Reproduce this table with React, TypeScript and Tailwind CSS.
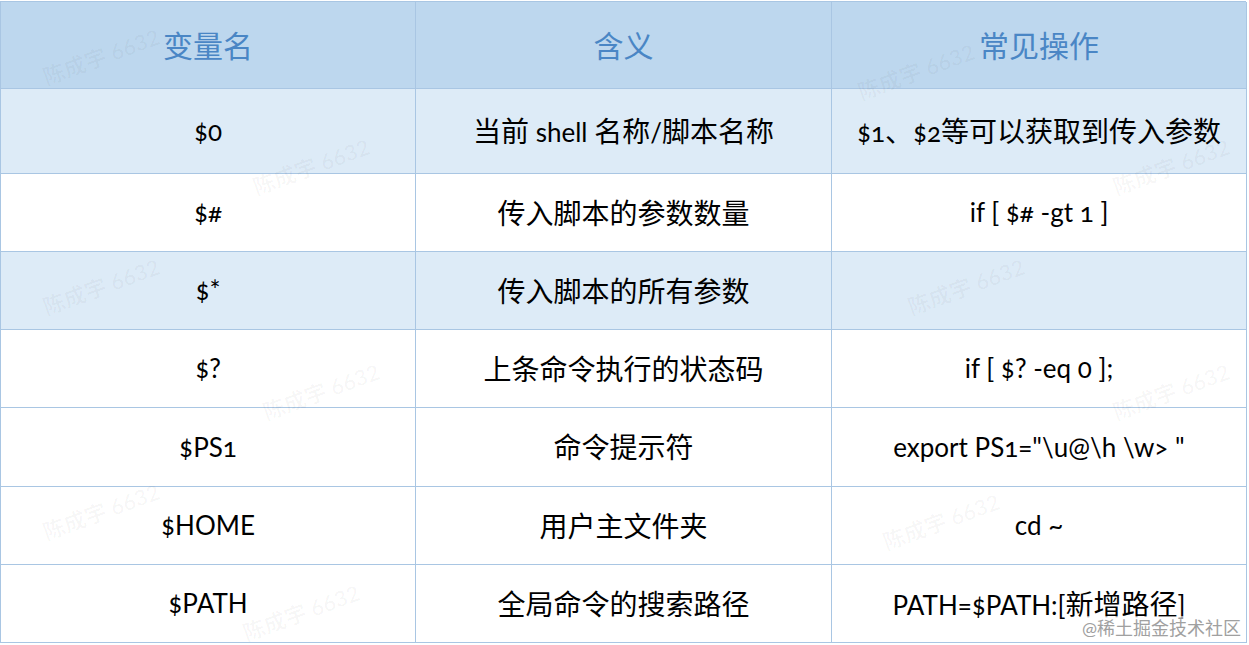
import React from "react";

const rows: { a: string; b: string; c: string; blue: boolean; h: string }[] = [
  { a: "$0", b: "当前 shell 名称/脚本名称", c: "$1、$2等可以获取到传入参数", blue: true, h: "h-[85px]" },
  { a: "$#", b: "传入脚本的参数数量", c: "if [ $# -gt 1 ]", blue: false, h: "h-[78px]" },
  { a: "$*", b: "传入脚本的所有参数", c: "", blue: true, h: "h-[78px]" },
  { a: "$?", b: "上条命令执行的状态码", c: "if [ $? -eq 0 ];", blue: false, h: "h-[78px]" },
  { a: "$PS1", b: "命令提示符", c: 'export PS1="\\u@\\h \\w> "', blue: false, h: "h-[79px]" },
  { a: "$HOME", b: "用户主文件夹", c: "cd ~", blue: false, h: "h-[78px]" },
  { a: "$PATH", b: "全局命令的搜索路径", c: "PATH=$PATH:[新增路径]", blue: false, h: "h-[78px]" },
];

const marks: [number, number][] = [
  [40, 40], [250, 150], [40, 270], [260, 375], [40, 495], [240, 596],
  [855, 55], [1110, 150], [905, 270], [1110, 375], [880, 505],
];

function Mixed({ text }: { text: string }) {
  const parts = text.match(/[\u3000-\u303f\u4e00-\u9fff]+|[^\u3000-\u303f\u4e00-\u9fff]+/g) || [];
  return (
    <>
      {parts.map((p, i) =>
        /[\u3000-\u303f\u4e00-\u9fff]/.test(p) ? (
          <span key={i} className="text-[28px]">
            {p}
          </span>
        ) : (
          <span key={i}>{p}</span>
        )
      )}
    </>
  );
}

export default function App() {
  const font = { fontFamily: '"Lato", "Noto Sans CJK SC", sans-serif' };
  return (
    <div className="relative w-[1249px] h-[645px] bg-white overflow-hidden" style={font}>
      <div className="w-[1246px] mt-px border-l border-t border-[#a9c6e3]">
        <div className="grid grid-cols-[415px_416px_415px] h-[87px] bg-[#bdd7ee]">
          {["变量名", "含义", "常见操作"].map((t) => (
            <div
              key={t}
              className="flex items-center justify-center border-r border-b border-[#a9c6e3] text-[30px] text-[#4a86c5]"
            >
              {t}
            </div>
          ))}
        </div>
        {rows.map((r, i) => (
          <div
            key={i}
            className={`grid grid-cols-[415px_416px_415px] ${r.h} ${r.blue ? "bg-[#ddebf7]" : "bg-white"}`}
          >
            {[r.a, r.b, r.c].map((t, j) => (
              <div
                key={j}
                className="flex items-center justify-center border-r border-b border-[#a9c6e3] text-[26px] text-black whitespace-pre oldstyle-nums"
              >
                <span>
                  <Mixed text={t} />
                </span>
              </div>
            ))}
          </div>
        ))}
      </div>
      {marks.map(([x, y], i) => (
        <div
          key={i}
          className="absolute text-[22px] text-black/[0.03] font-bold -rotate-[20deg] pointer-events-none whitespace-nowrap"
          style={{ left: x, top: y }}
        >
          陈成宇 6632
        </div>
      ))}
      <div className="absolute left-[1082px] top-[616px] text-[18px] leading-[24px] text-[#a0a0a0] bg-white/60 whitespace-nowrap">
        @稀土掘金技术社区
      </div>
    </div>
  );
}
